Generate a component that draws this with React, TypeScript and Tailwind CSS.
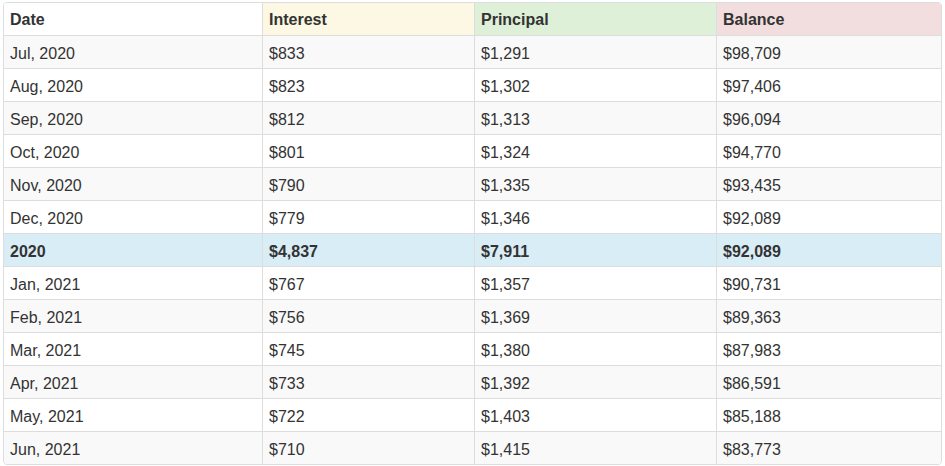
const rows: { d: string; i: string; p: string; b: string; total?: boolean }[] = [
  { d: "Jul, 2020", i: "$833", p: "$1,291", b: "$98,709" },
  { d: "Aug, 2020", i: "$823", p: "$1,302", b: "$97,406" },
  { d: "Sep, 2020", i: "$812", p: "$1,313", b: "$96,094" },
  { d: "Oct, 2020", i: "$801", p: "$1,324", b: "$94,770" },
  { d: "Nov, 2020", i: "$790", p: "$1,335", b: "$93,435" },
  { d: "Dec, 2020", i: "$779", p: "$1,346", b: "$92,089" },
  { d: "2020", i: "$4,837", p: "$7,911", b: "$92,089", total: true },
  { d: "Jan, 2021", i: "$767", p: "$1,357", b: "$90,731" },
  { d: "Feb, 2021", i: "$756", p: "$1,369", b: "$89,363" },
  { d: "Mar, 2021", i: "$745", p: "$1,380", b: "$87,983" },
  { d: "Apr, 2021", i: "$733", p: "$1,392", b: "$86,591" },
  { d: "May, 2021", i: "$722", p: "$1,403", b: "$85,188" },
  { d: "Jun, 2021", i: "$710", p: "$1,415", b: "$83,773" },
]

const cell = "h-[32px] flex items-center px-[6px] pt-[4px]"
const head = "h-[32px] flex items-center px-[6px] pt-[2px]"

export default function App() {
  return (
    <div className="bg-white min-h-screen pt-[2px] pl-[3px] text-[16px] text-[#333] font-['Liberation_Sans',Arial,sans-serif]">
      <div className="w-[939px] border border-[#ddd] rounded-[4px] overflow-hidden">
        <div className="grid grid-cols-[258px_212px_242px_1fr] font-bold border-b border-[#ddd]">
          <div className={`${head} bg-white`}>Date</div>
          <div className={`${head} bg-[#fcf8e3] border-l border-[#ddd]`}>Interest</div>
          <div className={`${head} bg-[#dff0d8] border-l border-[#ddd]`}>Principal</div>
          <div className={`${head} bg-[#f2dede] border-l border-[#ddd]`}>Balance</div>
        </div>
        {rows.map((r, idx) => {
          const bg = r.total ? "bg-[#d9edf7] font-bold" : idx % 2 === 0 ? "bg-[#f9f9f9]" : "bg-white"
          const last = idx === rows.length - 1
          return (
            <div
              key={r.d}
              className={`grid grid-cols-[258px_212px_242px_1fr] ${bg} ${last ? "" : "border-b border-[#ddd]"}`}
            >
              <div className={cell}>{r.d}</div>
              <div className={`${cell} border-l border-[#ddd]`}>{r.i}</div>
              <div className={`${cell} border-l border-[#ddd]`}>{r.p}</div>
              <div className={`${cell} border-l border-[#ddd]`}>{r.b}</div>
            </div>
          )
        })}
      </div>
    </div>
  )
}
